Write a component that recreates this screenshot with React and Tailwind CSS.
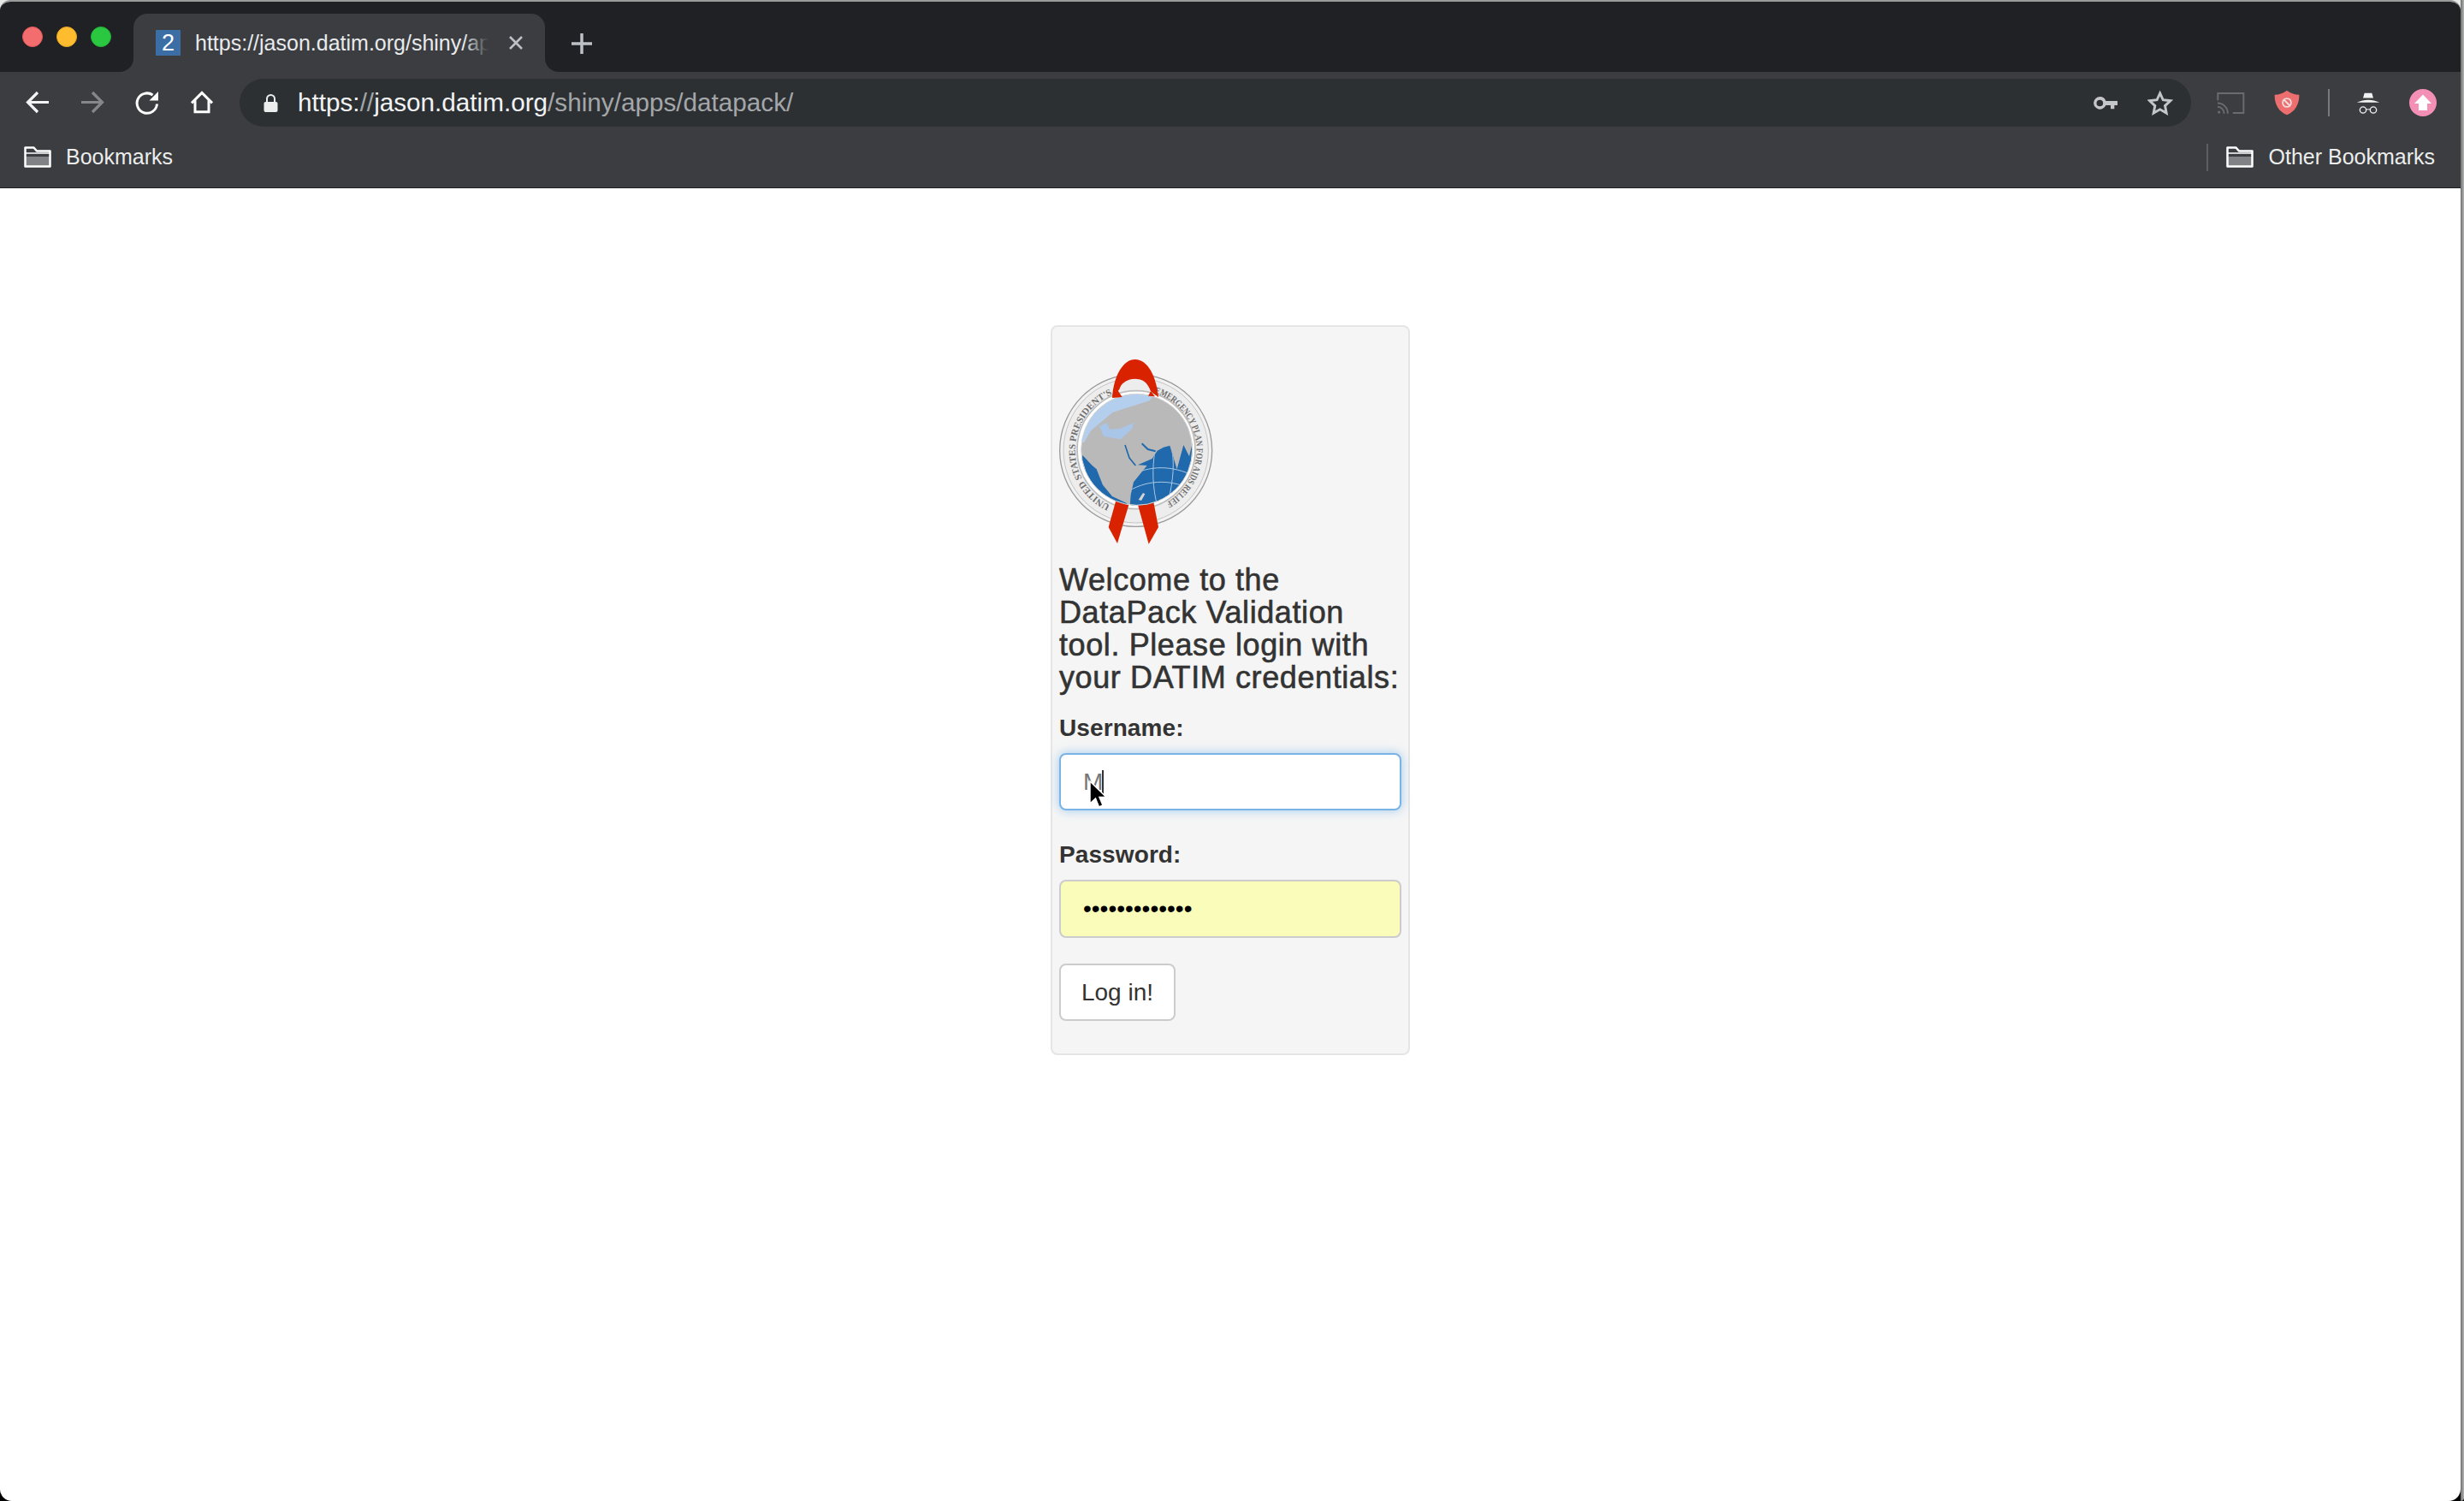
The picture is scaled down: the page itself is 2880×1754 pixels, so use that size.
import * as React from "react"

const FolderIcon = () => (
  <svg width="32" height="25" viewBox="0 0 32 25" fill="none" className="shrink-0">
    <path d="M1.5 12H30.5V23.5H1.5Z" fill="#808285" />
    <path d="M1.5 23.5V1.5H11.5L15 5.5H30.5V23.5Z" stroke="#fff" strokeWidth="2.5" strokeLinejoin="round" />
    <path d="M1.5 8H30.5" stroke="#fff" strokeWidth="1.5" />
  </svg>
)

const BackIcon = ({ color }) => (
  <svg width="28" height="28" viewBox="0 0 28 28" fill="none" stroke={color} strokeWidth="3.2" className="shrink-0">
    <path d="M27 13.5H3M14 2L2.5 13.5L14 25" />
  </svg>
)

const ForwardIcon = ({ color }) => (
  <svg width="28" height="28" viewBox="0 0 28 28" fill="none" stroke={color} strokeWidth="3.2" className="shrink-0">
    <path d="M1 13.5H25M14 2L25.5 13.5L14 25" />
  </svg>
)

const ReloadIcon = () => (
  <svg width="28" height="28" viewBox="0 0 28 28" fill="none" className="shrink-0">
    <path d="M25.5 15.5A11.7 11.7 0 1 1 20.5 5" stroke="#fff" strokeWidth="3" />
    <path d="M27 1V11.5H16.5Z" fill="#fff" />
  </svg>
)

const HomeIcon = () => (
  <svg width="28" height="28" viewBox="667 50 84 84" fill="none" stroke="#fff" strokeWidth="9" className="shrink-0">
    <path d="M673 93L709 57L745 93" />
    <path d="M685 84V124H733V84" />
  </svg>
)

const LockIcon = () => (
  <svg width="17" height="21" viewBox="0 0 17 21" className="shrink-0">
    <rect x="0.5" y="9" width="16" height="12" rx="2" fill="#eceded" />
    <path d="M4 10V5.5a4.5 4.5 0 0 1 9 0V10" fill="none" stroke="#eceded" strokeWidth="2" />
  </svg>
)

const KeyIcon = () => (
  <svg width="28" height="15" viewBox="145 335 84 45" className="shrink-0">
    <path fillRule="evenodd" d="M167 335a22 22 0 0 1 21 15H229V365H218V378H205V365H188a22 22 0 1 1-21-30ZM167 346a11.500 11.500 0 1 0 0 23a11.500 11.500 0 0 0 0-23Z" fill="#c4c6c8" />
  </svg>
)

const StarIcon = () => (
  <svg width="30" height="30" viewBox="333 315 92 90" fill="none" stroke="#c4c6c8" strokeWidth="9" className="shrink-0">
    <path d="M378 326L389 350L415 353L396 371L401 397L378 384L355 397L360 371L341 353L367 350Z" strokeLinejoin="miter" />
  </svg>
)

const CastIcon = () => (
  <svg width="33" height="27" viewBox="580 320 100 80" fill="none" stroke="#696b6e" strokeWidth="6" className="shrink-0">
    <path d="M584 350V325H675V395H637" />
    <path d="M583 360a36 36 0 0 1 36 37" />
    <path d="M583 373a23 23 0 0 1 23 24" />
    <circle cx="588" cy="392" r="5" fill="#696b6e" stroke="none" />
  </svg>
)

const ShieldIcon = () => (
  <svg width="30" height="30" viewBox="775 313 92 92" className="shrink-0">
    <path d="M821 315C835 325 850 330 865 331C866 365 850 392 821 403C792 392 776 365 777 331C792 330 807 325 821 315Z" fill="#ec6e6e" />
    <circle cx="821" cy="359" r="15" fill="none" stroke="#f4dcdc" strokeWidth="6" />
    <path d="M811 349L831 369" stroke="#f4dcdc" strokeWidth="6" />
  </svg>
)

const IncognitoIcon = () => (
  <svg width="28" height="27" viewBox="1062 320 84 80" className="shrink-0">
    <path d="M1086 342L1091 325H1117L1122 342Z" fill="#f1f1f1" />
    <path d="M1064 358C1078 352 1090 349 1104 349C1118 349 1130 352 1144 358Z" fill="#f1f1f1" />
    <circle cx="1086" cy="384" r="11" fill="none" stroke="#f1f1f1" strokeWidth="4" />
    <circle cx="1122" cy="384" r="11" fill="none" stroke="#f1f1f1" strokeWidth="4" />
    <path d="M1097 382H1111" stroke="#f1f1f1" strokeWidth="3" />
  </svg>
)

const UpdateBadge = () => (
  <svg width="32" height="32" viewBox="0 0 32 32" className="shrink-0">
    <circle cx="16" cy="16" r="16" fill="#f48fb5" />
    <path d="M16 6.500L26 17H21V25H11V17H6Z" fill="#fff" />
  </svg>
)

const PointerIcon = () => (
  <svg width="24" height="34" viewBox="0 0 24 34" className="absolute left-[32px] top-[30px]">
    <path d="M2 1V27L8.500 21L12.500 31L17 29L13 19.500H21Z" fill="#000" stroke="#fff" strokeWidth="1.5" />
  </svg>
)

// viewBox is in the same units as a 3x crop of the logo, easier to trace that way
const PepfarLogo = () => (
  <svg width="182" height="216" viewBox="84 150 546 648" className="shrink-0">
    <defs>
      <clipPath id="globeClip">
        <circle cx="356" cy="466" r="195" />
      </clipPath>
      <clipPath id="seaClip">
        <path d="M335 625L345 580L392 522L360 520L410 498L428 470L450 458L472 452L497 535L520 450L540 490L552 440V670H330Z" />
      </clipPath>
      <path id="ringLeft" d="M263 661A212 212 0 0 1 287 267" />
      <path id="ringRight" d="M418 267A212 212 0 0 1 443 661" />
    </defs>
    <circle cx="353" cy="469" r="267" fill="#f2f2f2" stroke="#9a9a9a" strokeWidth="4" />
    <circle cx="353" cy="469" r="254" fill="#ededed" stroke="#c4c4c4" strokeWidth="3" />
    <circle cx="354" cy="467" r="207" fill="#fff" stroke="#bdbdbd" strokeWidth="5" />
    <text fontFamily="'Liberation Serif', serif" fontWeight="700" fontSize="33" fill="#6f6f6f">
      <textPath href="#ringLeft" textLength="490" lengthAdjust="spacingAndGlyphs">UNITED STATES PRESIDENT'S</textPath>
    </text>
    <text fontFamily="'Liberation Serif', serif" fontWeight="700" fontSize="33" fill="#6f6f6f">
      <textPath href="#ringRight" textLength="490" lengthAdjust="spacingAndGlyphs">EMERGENCY PLAN FOR AIDS RELIEF</textPath>
    </text>
    <path d="M283 645L328 660L288 795L257 738Z" fill="#d92300" />
    <path d="M360 660L415 650L432 738L398 797Z" fill="#d92300" />
    <g clipPath="url(#globeClip)">
      <rect x="150" y="260" width="420" height="420" fill="#b9b9b9" />
      <path d="M150 445L172 440L195 400L272 335L400 295L420 270H150Z" fill="#b4cfee" />
      <path d="M225 385L250 372L262 395L300 392L345 372L340 392L300 430L240 420Z" fill="#a9c6e8" />
      <path d="M150 480L168 488L200 522L215 535L237 590L270 630L322 655L300 690H150Z" fill="#2069ac" />
      <path d="M335 625L345 580L392 522L360 520L410 498L428 470L450 458L472 452L497 535L520 450L540 490L552 440L570 440V690H330Z" fill="#2069ac" />
      <path d="M362 642L378 618L385 622L372 645Z" fill="#d4d4d4" />
      <path d="M315 450L330 495L352 522" fill="none" stroke="#2069ac" strokeWidth="5" />
      <path d="M374 445L395 465L422 472" fill="none" stroke="#2069ac" strokeWidth="6" />
      <path d="M516 350L552 430V350Z" fill="#8fb5de" />
      <g clipPath="url(#seaClip)" fill="none" stroke="#a8c8e6" strokeWidth="3">
        <path d="M330 560C400 520 480 520 560 560" />
        <path d="M330 610C400 570 480 570 560 610" />
        <path d="M420 470C410 530 410 600 430 670" />
        <path d="M480 470C490 530 480 600 460 670" />
      </g>
    </g>
    <circle cx="356" cy="466" r="195" fill="none" stroke="#d5d5d5" strokeWidth="3" />
    <path d="M270 285C275 205 310 150 350 150C395 150 425 210 432 283L405 262C395 230 375 218 350 218C320 218 300 235 295 255Z" fill="#d92300" />
    <path d="M285 252L305 282L270 285Z" fill="#d92300" />
    <path d="M405 262L420 280L396 278Z" fill="#d92300" />
  </svg>
)

export default function App() {
  return (
    <div className="flex w-[2880px] h-[1754px] bg-[linear-gradient(to_bottom,#e8e8e8_0,#e8e8e8_50%,#000_50%,#000_100%)] font-['Liberation_Sans',sans-serif] overflow-hidden">
      <div className="flex flex-col w-[2876px] h-full rounded-t-[12px] rounded-b-[14px] overflow-hidden border-t-2 border-[#9b9b9b]">
        {/* Tab strip */}
        <div className="flex h-[82px] shrink-0 bg-[#202124] pt-[14px]">
          <div className="flex items-center gap-[16px] pl-[26px] w-[156px] h-[54px]">
            <span className="w-[24px] h-[24px] rounded-full bg-[#f36d6f] border border-[#e05a5a]" />
            <span className="w-[24px] h-[24px] rounded-full bg-[#febc2e] border border-[#e5a827]" />
            <span className="w-[24px] h-[24px] rounded-full bg-[#2ac840] border border-[#25b038]" />
          </div>
          <div className="relative flex items-start w-[481px] h-[68px] rounded-t-[16px] bg-[#3b3d40] pl-[26px] pt-[19px]">
            <span className="absolute -left-[16px] bottom-0 w-[16px] h-[16px] bg-[#3b3d40]">
              <span className="block w-full h-full rounded-br-[16px] bg-[#202124]" />
            </span>
            <span className="absolute -right-[16px] bottom-0 w-[16px] h-[16px] bg-[#3b3d40]">
              <span className="block w-full h-full rounded-bl-[16px] bg-[#202124]" />
            </span>
            <span className="flex items-center justify-center w-[29px] h-[30px] bg-[#3a6ea5] text-white text-[27px] leading-none shrink-0">2</span>
            <div className="relative w-[350px] ml-[17px] overflow-hidden whitespace-nowrap text-[25px] leading-[30px] text-[#e8eaed]">
              https://jason.datim.org/shiny/apps/datapack/
              <span className="absolute right-0 top-0 w-[36px] h-full bg-gradient-to-r from-transparent to-[#3b3d40] to-80%" />
            </div>
            <svg width="18" height="18" viewBox="0 0 18 18" className="ml-[16px] mt-[6px] shrink-0" stroke="#bdc1c6" strokeWidth="2.600">
              <path d="M2 2L16 16M16 2L2 16" />
            </svg>
          </div>
          <svg width="24" height="24" viewBox="0 0 24 24" className="ml-[31px] mt-[23px] shrink-0" stroke="#bdc1c6" strokeWidth="3.500">
            <path d="M12 0V24M0 12H24" />
          </svg>
        </div>

        {/* Toolbar */}
        <div className="flex items-center h-[66px] shrink-0 bg-[#3b3d40] pl-[30px] pr-[28px] pt-[8px] pb-[2px]">
          <div className="flex items-center gap-[36px]">
            <BackIcon color="#f1f3f4" />
            <ForwardIcon color="#85878a" />
            <ReloadIcon />
            <HomeIcon />
          </div>
          <div className="flex items-center flex-1 h-[56px] ml-[30px] rounded-full bg-[#2d3033] pl-[28px] pr-[21px]">
            <LockIcon />
            <div className="ml-[23px] text-[29.7px] leading-none whitespace-nowrap text-[#a4a7aa]">
              <span className="text-[#f1f3f4]">https:</span>//<span className="text-[#f1f3f4]">jason.datim.org</span>/shiny/apps/datapack/
            </div>
            <div className="flex items-center gap-[35px] ml-auto">
              <KeyIcon />
              <StarIcon />
            </div>
          </div>
          <div className="flex items-center ml-[30px]">
            <CastIcon />
            <span className="ml-[34px]"><ShieldIcon /></span>
            <span className="w-[2px] h-[32px] bg-[#77797c] ml-[33px]" />
            <span className="ml-[31px]"><IncognitoIcon /></span>
            <span className="ml-[34px]"><UpdateBadge /></span>
          </div>
        </div>

        {/* Bookmarks bar */}
        <div className="flex items-center h-[70px] shrink-0 bg-[#3b3d40] border-b border-[#202124] pl-[28px] pr-[30px] pb-[2px] text-[25px] text-[#eceded]">
          <FolderIcon />
          <span className="ml-[17px]">Bookmarks</span>
          <span className="ml-auto w-[2px] h-[32px] bg-[#5c5e61]" />
          <span className="ml-[21px]"><FolderIcon /></span>
          <span className="ml-[17px]">Other Bookmarks</span>
        </div>

        {/* Page */}
        <div className="flex-1 flex justify-center items-start bg-white pt-[160px]">
          <div className="flex flex-col w-[420px] h-[853px] px-[8px] pt-[38px] rounded-[8px] border-2 border-[#e5e5e5] bg-[#f5f5f5] text-[#333]">
            <PepfarLogo />
            <h4 className="mt-[23px] text-[36px] leading-[38px] tracking-[0.6px] [-webkit-text-stroke:0.6px_#333]">
              Welcome to the DataPack Validation tool. Please login with your DATIM credentials:
            </h4>

            <label className="mt-[20px] text-[28px] leading-[39px] font-bold tracking-[0.1px]">Username:</label>
            <div className="relative mt-[10px] flex items-center h-[67px] pl-[26px] rounded-[8px] border-2 border-[#7ab3e6] bg-white shadow-[0_0_12px_rgba(102,175,233,0.6)]">
              <span className="text-[28px] leading-none text-[#777]">M</span>
              <span className="w-[1.5px] h-[28px] -ml-[1px] bg-[#333]" />
              <PointerIcon />
            </div>

            <label className="mt-[32px] text-[28px] leading-[39px] font-bold tracking-[0.1px]">Password:</label>
            <div className="mt-[10px] flex items-center h-[68px] pl-[26px] rounded-[8px] border-2 border-[#cccccc] bg-[#fafdb9]">
              <span className="text-[28px] leading-none text-black">•••••••••••••</span>
            </div>

            <button className="mt-[30px] w-[136px] h-[67px] pt-[1px] rounded-[8px] border-2 border-[#cccccc] bg-white text-[28px] text-[#333]">
              Log in!
            </button>
          </div>
        </div>
      </div>
      <div className="w-[4px] h-full rounded-br-[14px] bg-gradient-to-r from-[#6f6f6f] to-[#b5b5b5]" />
    </div>
  )
}
